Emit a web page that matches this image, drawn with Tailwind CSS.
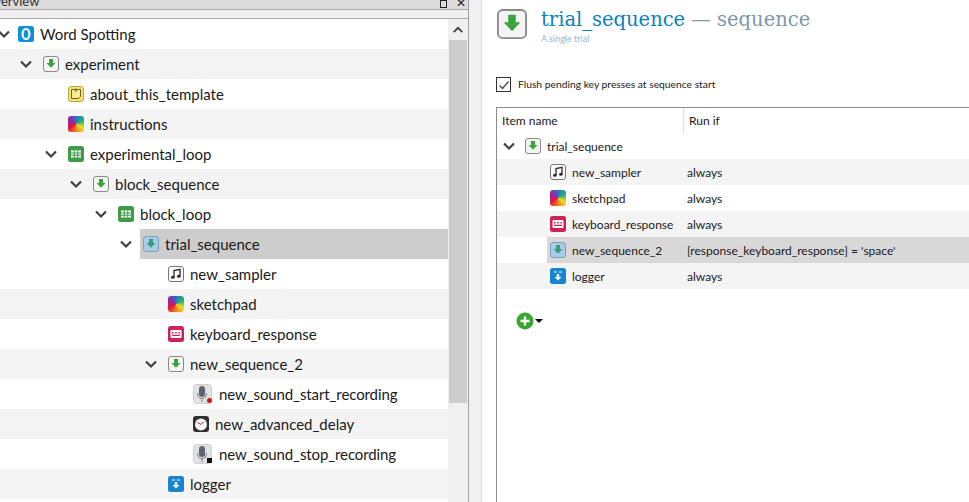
<!doctype html>
<html><head><meta charset="utf-8"><script src="https://cdn.jsdelivr.net/npm/@tailwindcss/browser@4"></script></head>
<body class="m-0 bg-[#f0f0f0]">
<svg width="0" height="0" class="absolute">
<defs>
<symbol id="chev" viewBox="0 0 14 14"><path d="M2 4.5 7 9.5 12 4.5" fill="none" stroke="#404040" stroke-width="2.2"/></symbol>
<symbol id="seq" viewBox="0 0 16 16"><rect x=".5" y=".5" width="15" height="15" rx="2.5" fill="#f4f4f4" stroke="#8a8a8a"/><path d="M6 3h4v4h2.5L8 11.8 3.5 7H6z" fill="#3da33f"/></symbol>
<symbol id="seqsel" viewBox="0 0 16 16"><rect x=".5" y=".5" width="15" height="15" rx="2.5" fill="#a9cde6" stroke="#7f9db5"/><path d="M6 3h4v4h2.5L8 11.8 3.5 7H6z" fill="#3c9a80"/></symbol>
<symbol id="loop" viewBox="0 0 16 16"><rect width="16" height="16" rx="2.5" fill="#3f9a49"/><path d="M3 4.5h10v7H3z" fill="#fff"/><path d="M3 7h10M3 9.2h10M6.3 4.5v7M9.7 4.5v7" stroke="#3f9a49" stroke-width="1"/></symbol>
<symbol id="note" viewBox="0 0 16 16"><rect x=".5" y=".5" width="15" height="15" rx="2.5" fill="#f6e46a" stroke="#b9a94a"/><path d="M3.5 3.5h9v7l-2 2h-7z" fill="#f8ec8e" stroke="#6d6430"/><rect x="6.5" y="2.5" width="2.5" height="3" fill="#8a8040"/></symbol>
<symbol id="music" viewBox="0 0 16 16"><rect x=".5" y=".5" width="15" height="15" rx="2.5" fill="#fafafa" stroke="#777"/><path d="M6 11V4.5l6-1.2V10" fill="none" stroke="#2a2a2a" stroke-width="1.3"/><ellipse cx="4.8" cy="11.2" rx="1.8" ry="1.5" fill="#2a2a2a"/><ellipse cx="10.8" cy="10.2" rx="1.8" ry="1.5" fill="#2a2a2a"/></symbol>
<symbol id="keys" viewBox="0 0 16 16"><rect width="16" height="16" rx="2.5" fill="#cf2358"/><rect x="2.5" y="4" width="11" height="8" rx="1" fill="#fff"/><path d="M4 6h1.6v1.4H4zM7.2 6h1.6v1.4H7.2zM10.4 6H12v1.4h-1.6zM4 8.8h8v1.2H4z" fill="#cf2358"/></symbol>
<symbol id="log" viewBox="0 0 16 16"><rect width="16" height="16" rx="2.5" fill="#1784d4"/><path d="M4 4h3M9 4h3" stroke="#fff" stroke-width="1"/><path d="M6.8 6h2.4v3h2.3L8 12.6 4.5 9h2.3z" fill="#fff"/></symbol>
<symbol id="logo" viewBox="0 0 16 16"><rect width="16" height="16" rx="2.5" fill="#0f8fdc"/><ellipse cx="8" cy="8" rx="3.4" ry="5" fill="none" stroke="#fff" stroke-width="2.2"/></symbol>
<symbol id="clock" viewBox="0 0 16 16"><rect width="16" height="16" rx="3" fill="#2e2e2e"/><circle cx="8" cy="8.5" r="6" fill="#f5f5f5"/><path d="M8 8.5 11 5.5" stroke="#444" stroke-width="1"/><path d="M8 8.5 4.5 6.5" stroke="#c22" stroke-width="1"/></symbol>
<symbol id="mic" viewBox="0 0 20 20"><rect x=".5" y=".5" width="18" height="19" rx="3" fill="#e2e2e2" stroke="#cfcfcf"/><rect x="6" y="2" width="6" height="11" rx="3" fill="#5d6670"/><path d="M4.5 9c0 7.5 9 7.5 9 0M9 15v3" fill="none" stroke="#8a9096" stroke-width="1.2"/></symbol>
<symbol id="plus" viewBox="0 0 18 18"><circle cx="9" cy="9" r="8.5" fill="#37a82f"/><path d="M9 4.5v9M4.5 9h9" stroke="#fff" stroke-width="2.4"/></symbol>
</defs>
</svg>
<div class="flex h-[502px] w-[969px] overflow-hidden text-[#1a1a1a] font-['Lato',sans-serif]">

<section class="flex w-[469px] shrink-0 flex-col border-r border-[#a0a0a0]">
  <div class="flex h-[10px] shrink-0 items-end justify-between overflow-hidden border-b border-[#a8a8a8] bg-[#dcdcdc] pr-[2px]">
    <span class="ml-[-16px] text-[13px] leading-[16px] text-[#333]">Overview</span>
    <span class="flex items-end gap-[9px] text-[#222]"><span class="mb-[1px] h-[8px] w-[7px] border border-[#222]"></span><span class="text-[12px] leading-[12px]">✕</span></span>
  </div>
  <div class="h-[8px] shrink-0 bg-[#f0f0f0]"></div>
  <div class="flex min-h-0 flex-1 border-t border-[#a8a8a8] bg-white text-[15px]">
    <div class="min-w-0 flex-1">
      <div class="flex h-[30px] items-center ml-[-3px]"><svg class="mr-[7px] size-[14px]"><use href="#chev"/></svg><svg class="size-4"><use href="#logo"/></svg><span class="ml-[6px]">Word Spotting</span></div>
      <div class="flex h-[30px] items-center bg-[#f4f4f4] pl-[19px]"><svg class="mr-[10px] size-[14px]"><use href="#chev"/></svg><svg class="size-4"><use href="#seq"/></svg><span class="ml-[6px]">experiment</span></div>
      <div class="flex h-[30px] items-center pl-[68px]"><svg class="size-4"><use href="#note"/></svg><span class="ml-[6px]">about_this_template</span></div>
      <div class="flex h-[30px] items-center bg-[#f4f4f4] pl-[68px]"><span class="size-4 rounded-[3px] bg-[conic-gradient(#2b6fd0,#20b070,#e8e020,#f08020,#e01840,#a020a0,#2b6fd0)]"></span><span class="ml-[6px]">instructions</span></div>
      <div class="flex h-[30px] items-center pl-[44px]"><svg class="mr-[10px] size-[14px]"><use href="#chev"/></svg><svg class="size-4"><use href="#loop"/></svg><span class="ml-[6px]">experimental_loop</span></div>
      <div class="flex h-[30px] items-center bg-[#f4f4f4] pl-[69px]"><svg class="mr-[10px] size-[14px]"><use href="#chev"/></svg><svg class="size-4"><use href="#seq"/></svg><span class="ml-[6px]">block_sequence</span></div>
      <div class="flex h-[30px] items-center pl-[94px]"><svg class="mr-[10px] size-[14px]"><use href="#chev"/></svg><svg class="size-4"><use href="#loop"/></svg><span class="ml-[6px]">block_loop</span></div>
      <div class="flex h-[30px] items-center pl-[119px]"><svg class="mr-[7px] size-[14px]"><use href="#chev"/></svg><div class="flex h-full flex-1 items-center bg-[#cdcdcd] pl-[3px]"><svg class="size-4"><use href="#seqsel"/></svg><span class="ml-[6px]">trial_sequence</span></div></div>
      <div class="flex h-[30px] items-center pl-[168px]"><svg class="size-4"><use href="#music"/></svg><span class="ml-[6px]">new_sampler</span></div>
      <div class="flex h-[30px] items-center bg-[#f4f4f4] pl-[168px]"><span class="size-4 rounded-[3px] bg-[conic-gradient(#2b6fd0,#20b070,#e8e020,#f08020,#e01840,#a020a0,#2b6fd0)]"></span><span class="ml-[6px]">sketchpad</span></div>
      <div class="flex h-[30px] items-center pl-[168px]"><svg class="size-4"><use href="#keys"/></svg><span class="ml-[6px]">keyboard_response</span></div>
      <div class="flex h-[30px] items-center bg-[#f4f4f4] pl-[144px]"><svg class="mr-[10px] size-[14px]"><use href="#chev"/></svg><svg class="size-4"><use href="#seq"/></svg><span class="ml-[6px]">new_sequence_2</span></div>
      <div class="flex h-[30px] items-center pl-[193px]"><span class="relative size-5"><svg class="size-5"><use href="#mic"/></svg><span class="absolute right-[1px] bottom-[1px] size-[5px] rounded-full bg-[#e01010]"></span></span><span class="ml-[6px] tracking-[-0.1px]">new_sound_start_recording</span></div>
      <div class="flex h-[30px] items-center bg-[#f4f4f4] pl-[193px]"><svg class="size-4"><use href="#clock"/></svg><span class="ml-[6px]">new_advanced_delay</span></div>
      <div class="flex h-[30px] items-center pl-[193px]"><span class="relative size-5"><svg class="size-5"><use href="#mic"/></svg><span class="absolute right-[1px] bottom-[1px] size-[5px] bg-[#111]"></span></span><span class="ml-[6px] tracking-[-0.1px]">new_sound_stop_recording</span></div>
      <div class="flex h-[30px] items-center bg-[#f4f4f4] pl-[168px]"><svg class="size-4"><use href="#log"/></svg><span class="ml-[6px]">logger</span></div>
    </div>
    <div class="flex w-[20px] shrink-0 flex-col bg-[#f0f0f0]">
      <div class="flex h-[21px] items-center justify-center"><svg class="size-[12px] rotate-180"><use href="#chev"/></svg></div>
      <div class="mx-[1px] h-[363px] bg-[#cdcdcd]"></div>
    </div>
  </div>
</section>

<div class="w-[13px] shrink-0 border-r border-[#dcdcdc] bg-[#f0f0f0]"></div>

<main class="min-w-0 flex-1 bg-white pl-[14px]">
  <header class="flex h-[77px] items-start gap-[14px] pt-[9px] pl-[1px]">
    <svg class="size-[30px] shrink-0"><use href="#seq"/></svg>
    <div class="-mt-[4px]">
      <h1 class="text-[19.5px] leading-[30px] font-['DejaVu_Serif',serif] text-[#0b7fbf]">trial_sequence <span class="text-[#7d98aa]">— sequence</span></h1>
      <p class="-mt-[2px] text-[9px] leading-[12px] text-[#9cb2c2]">A single trial</p>
    </div>
  </header>
  <label class="flex h-[15px] items-center gap-[7px] text-[10.3px]">
    <span class="flex size-[15px] shrink-0 items-center justify-center border border-[#333]"><svg class="size-[12px]" viewBox="0 0 12 12"><path d="M1.5 6.5 4.5 9.5 10.5 2.5" fill="none" stroke="#444" stroke-width="1.2"/></svg></span>
    Flush pending key presses at sequence start
  </label>
  <div class="mt-[15px] h-[395px] border-t border-l border-[#8c8c8c] text-[12px]">
    <div class="flex h-[25px] items-center">
      <span class="flex h-full w-[187px] items-center border-r border-[#dcdcdc] pl-[5px]">Item name</span><span class="pl-[5px]">Run if</span>
    </div>
    <div class="flex h-[26px] items-center pl-[5px]"><svg class="mr-[9px] size-[14px]"><use href="#chev"/></svg><svg class="size-4"><use href="#seq"/></svg><span class="mt-[2px] ml-[6px]">trial_sequence</span></div>
    <div class="flex h-[26px] items-center bg-[#f4f4f4] pl-[53px]"><svg class="size-4"><use href="#music"/></svg><span class="mt-[2px] ml-[6px] w-[115px]">new_sampler</span><span class="mt-[2px]">always</span></div>
    <div class="flex h-[26px] items-center pl-[53px]"><span class="size-4 rounded-[3px] bg-[conic-gradient(#2b6fd0,#20b070,#e8e020,#f08020,#e01840,#a020a0,#2b6fd0)]"></span><span class="mt-[2px] ml-[6px] w-[115px]">sketchpad</span><span class="mt-[2px]">always</span></div>
    <div class="flex h-[26px] items-center bg-[#f4f4f4] pl-[53px]"><svg class="size-4"><use href="#keys"/></svg><span class="mt-[2px] ml-[6px] w-[115px]">keyboard_response</span><span class="mt-[2px]">always</span></div>
    <div class="flex h-[26px] items-center pl-[50px]"><div class="flex h-full flex-1 items-center bg-[#d8d8d8] pl-[3px]"><svg class="size-4"><use href="#seqsel"/></svg><span class="mt-[2px] ml-[6px] w-[115px]">new_sequence_2</span><span class="mt-[2px]">[response_keyboard_response] = 'space'</span></div></div>
    <div class="flex h-[26px] items-center bg-[#f4f4f4] pl-[53px]"><svg class="size-4"><use href="#log"/></svg><span class="mt-[2px] ml-[6px] w-[115px]">logger</span><span class="mt-[2px]">always</span></div>
    <div class="mt-[23px] flex items-center pl-[19px]"><svg class="size-[18px]"><use href="#plus"/></svg><span class="ml-[1px] h-0 w-0 border-x-[4px] border-t-[4px] border-x-transparent border-t-black"></span></div>
  </div>
</main>
</div>
</body></html>
